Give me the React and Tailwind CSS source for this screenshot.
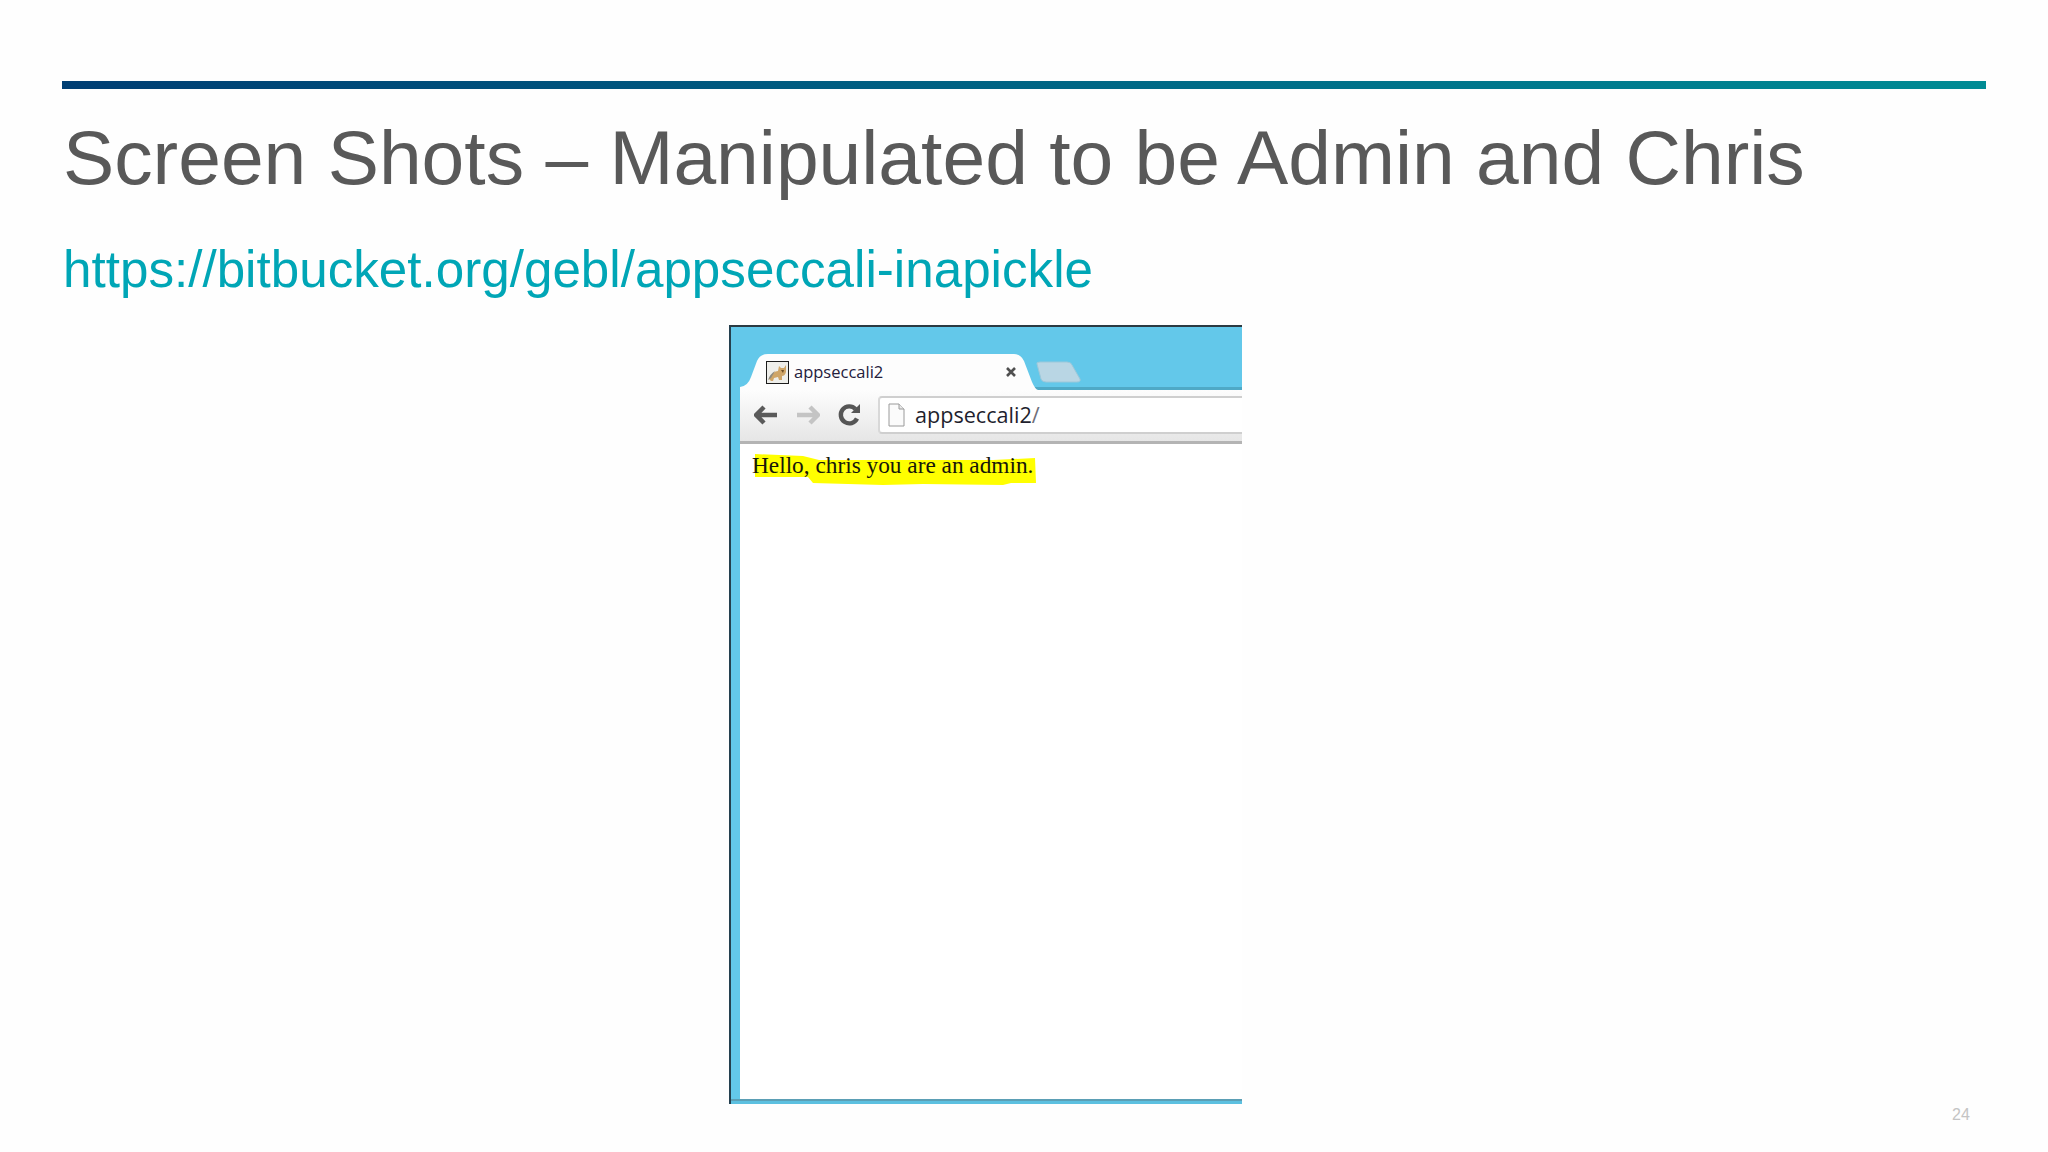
import React from 'react';

const ChromeTab = () => (
  <div className="relative z-10 -mb-[3px] h-[37px] w-[298px] shrink-0">
    <svg className="absolute inset-0" width="298" height="37" viewBox="0 0 298 37">
      <path d="M0 37 L0 34 Q8 33 11 24 L17 8 Q20 1 28 1 L274 1 Q281 1 284 8 L292 29 Q295 36 298 37 Z" fill="#fdfdfd" />
    </svg>
    <div className="relative flex h-full items-center pl-[26px] pt-[1px]">
      <svg width="23" height="23" viewBox="0 0 23 23" className="shrink-0">
        <rect x="0.5" y="0.5" width="22" height="22" fill="#eeeeea" stroke="#1c1c1c" />
        <path d="M3 18 Q7 10 12 10 L13 5 L15 7 L18 7 L20 4 L20 11 Q19 15 16 15 L16 19 L13 19 L12 16 L8 17 L7 20 L5 20 Z" fill="#cfa567" />
        <path d="M2 19 Q4 13 9 10 L5 17 Z" fill="#8d8a80" />
        <path d="M15 9 L18 9 L17 12 Z" fill="#6d4d24" />
      </svg>
      <span className="ml-[5px] font-['Open_Sans',sans-serif] text-[16.5px] leading-none text-[#24203c]">appseccali2</span>
      <svg width="12" height="12" viewBox="0 0 12 12" className="ml-[122px] shrink-0">
        <path d="M2 2 L10 10 M10 2 L2 10" stroke="#505050" strokeWidth="2.6" />
      </svg>
    </div>
  </div>
);

const NewTabButton = () => (
  <svg width="46" height="22" viewBox="0 0 46 22" className="z-10 mb-[4px] -ml-[2px] shrink-0">
    <path d="M1 3 Q0 1 4 1 L31 1 Q35 1 36 4 L44 18 Q45 21 41 21 L10 21 Q6 21 5 18 Z" fill="#b9d6e4" stroke="#9cc8da" />
  </svg>
);

const NavArrow = ({ color, flip }) => (
  <svg width="24" height="20" viewBox="0 0 24 20" className={flip ? 'shrink-0 -scale-x-100' : 'shrink-0'}>
    <path d="M10 2 L2 10 L10 18 M3 10 L23 10" fill="none" stroke={color} strokeWidth="4.5" strokeLinejoin="round" />
  </svg>
);

const ReloadIcon = () => (
  <svg width="24" height="24" viewBox="0 0 24 24" className="shrink-0">
    <path d="M19 15.5 A8.5 8.5 0 1 1 17.5 6" fill="none" stroke="#555555" strokeWidth="4.4" />
    <path d="M13 10 L22 10 L22 1 Z" fill="#555555" />
  </svg>
);

const PageIcon = () => (
  <svg width="17" height="24" viewBox="0 0 17 24" className="shrink-0">
    <path d="M1 1 L11 1 L16 6 L16 23 L1 23 Z" fill="#fbfbfb" stroke="#9a9a9a" />
    <path d="M11 1 L11 6 L16 6" fill="#e8e8e8" stroke="#9a9a9a" />
  </svg>
);

const Toolbar = () => (
  <div className="flex h-[51px] bg-gradient-to-b from-[#fdfdfd] to-[#e6e6e6] pt-[6px]">
    <div className="flex h-[38px] w-[138px] items-center pl-[14px]">
      <NavArrow color="#5a5a5a" />
      <div className="ml-[18px]">
        <NavArrow color="#c4c4c4" flip />
      </div>
      <div className="ml-[18px]">
        <ReloadIcon />
      </div>
    </div>
    <div className="flex h-[38px] flex-1 items-center rounded-l-[4px] border-y-2 border-l-2 border-y-[#cfcfcf] border-l-[#d8d8d8] bg-white pl-[8px]">
      <PageIcon />
      <span className="ml-[10px] font-['Open_Sans',sans-serif] text-[21.6px] leading-none text-[#1f1f2e]">
        appseccali2<span className="text-[#6f6f7a]">/</span>
      </span>
    </div>
  </div>
);

const BrowserShot = () => (
  <div className="ml-[729px] mt-[25px] flex h-[779px] w-[513px] flex-col border-l-2 border-t-2 border-l-[#25404f] border-t-[#2b3a42] bg-[#63c8ea]">
    <div className="flex min-h-0 flex-1 flex-col pl-[9px]">
      <div className="flex h-[63px] items-end border-b-[3px] border-b-[#4fa9c6]">
        <ChromeTab />
        <NewTabButton />
      </div>
      <Toolbar />
      <div className="flex-1 border-t-[3px] border-t-[#b4b4b4] bg-white pl-[12px] pt-[5px]">
        <div className="relative w-fit">
          <svg className="absolute left-[1px] top-[5px]" width="284" height="32" viewBox="0 0 284 32">
            <path d="M2 0 L50 2 L66 6 L200 6 L240 6 L282 4 L283 29 L258 29 L250 31 L170 30 L130 31 L60 29 L55 23 L2 23 Z" fill="#ffff00" />
          </svg>
          <p className="relative font-['Liberation_Serif',serif] text-[23.3px] leading-[32px] text-[#16160a]">Hello, chris you are an admin.</p>
        </div>
      </div>
    </div>
    <div className="h-[5px] border-t-2 border-t-[#5b9fb5] bg-[#5cc0e0]" />
  </div>
);

export default function App() {
  return (
    <div className="relative h-[1152px] w-[2048px] overflow-hidden bg-[#fefefe] pl-[62px] font-['Liberation_Sans',sans-serif]">
      <div className="pt-[81px]">
        <div className="h-[8px] w-[1924px] bg-gradient-to-r from-[#003e73] to-[#008b94]" />
      </div>
      <h1 className="ml-[1px] mt-[27px] text-[76.8px] font-normal leading-[82px] text-[#595959]">
        Screen Shots – Manipulated to be Admin and Chris
      </h1>
      <p className="ml-[1px] mt-[42px] text-[51.2px] leading-[60px] text-[#00a6b6]">https://bitbucket.org/gebl/appseccali-inapickle</p>
      <div className="-ml-[62px]">
        <BrowserShot />
      </div>
      <span className="absolute left-[1952px] top-[1106px] text-[16px] leading-[18px] text-[#c4c4c4]">24</span>
    </div>
  );
}
